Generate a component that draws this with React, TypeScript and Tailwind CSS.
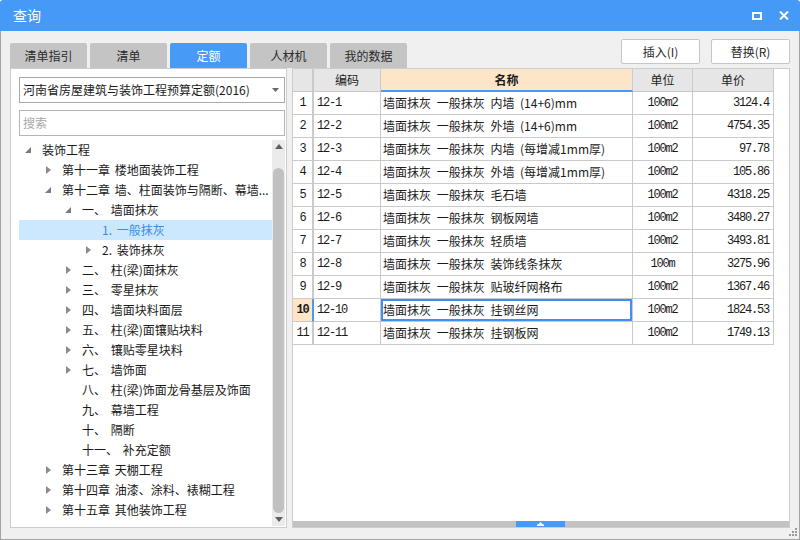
import React from "react";

type Node = { lvl: number; icon?: "open" | "closed"; text: string; sel?: boolean };

const tree: Node[] = [
  { lvl: 0, icon: "open", text: "装饰工程" },
  { lvl: 1, icon: "closed", text: "第十一章 楼地面装饰工程" },
  { lvl: 1, icon: "open", text: "第十二章 墙、柱面装饰与隔断、幕墙..." },
  { lvl: 2, icon: "open", text: "一、 墙面抹灰" },
  { lvl: 3, text: "1. 一般抹灰", sel: true },
  { lvl: 3, icon: "closed", text: "2. 装饰抹灰" },
  { lvl: 2, icon: "closed", text: "二、 柱(梁)面抹灰" },
  { lvl: 2, icon: "closed", text: "三、 零星抹灰" },
  { lvl: 2, icon: "closed", text: "四、 墙面块料面层" },
  { lvl: 2, icon: "closed", text: "五、 柱(梁)面镶贴块料" },
  { lvl: 2, icon: "closed", text: "六、 镶贴零星块料" },
  { lvl: 2, icon: "closed", text: "七、 墙饰面" },
  { lvl: 2, text: "八、 柱(梁)饰面龙骨基层及饰面" },
  { lvl: 2, text: "九、 幕墙工程" },
  { lvl: 2, text: "十、 隔断" },
  { lvl: 2, text: "十一、 补充定额" },
  { lvl: 1, icon: "closed", text: "第十三章 天棚工程" },
  { lvl: 1, icon: "closed", text: "第十四章 油漆、涂料、裱糊工程" },
  { lvl: 1, icon: "closed", text: "第十五章 其他装饰工程" },
];

const rows = [
  ["12-1", "墙面抹灰 一般抹灰 内墙 (14+6)mm", "100m2", "3124.4"],
  ["12-2", "墙面抹灰 一般抹灰 外墙 (14+6)mm", "100m2", "4754.35"],
  ["12-3", "墙面抹灰 一般抹灰 内墙 (每增减1mm厚)", "100m2", "97.78"],
  ["12-4", "墙面抹灰 一般抹灰 外墙 (每增减1mm厚)", "100m2", "105.86"],
  ["12-5", "墙面抹灰 一般抹灰 毛石墙", "100m2", "4318.25"],
  ["12-6", "墙面抹灰 一般抹灰 钢板网墙", "100m2", "3480.27"],
  ["12-7", "墙面抹灰 一般抹灰 轻质墙", "100m2", "3493.81"],
  ["12-8", "墙面抹灰 一般抹灰 装饰线条抹灰", "100m", "3275.96"],
  ["12-9", "墙面抹灰 一般抹灰 贴玻纤网格布", "100m2", "1367.46"],
  ["12-10", "墙面抹灰 一般抹灰 挂钢丝网", "100m2", "1824.53"],
  ["12-11", "墙面抹灰 一般抹灰 挂钢板网", "100m2", "1749.13"],
];

const tabs = ["清单指引", "清单", "定额", "人材机", "我的数据"];

function Arrow({ kind }: { kind?: "open" | "closed" }) {
  if (kind === "open")
    return (
      <svg width="6" height="6" viewBox="0 0 6 6">
        <path d="M6 0 L6 6 L0 6 Z" fill="#7b7b7b" />
      </svg>
    );
  if (kind === "closed")
    return (
      <svg width="5" height="8" viewBox="0 0 5 8">
        <path d="M0 0 L5 4 L0 8 Z" fill="#8c8c8c" />
      </svg>
    );
  return null;
}

function TreeRow({ n }: { n: Node }) {
  return (
    <div
      className={`flex h-[20px] items-center whitespace-nowrap text-[12px] leading-[20px] ${
        n.sel ? "bg-[#cce8ff] text-[#3b8de6]" : "text-[#1a1a1a]"
      }`}
    >
      <div style={{ width: n.lvl * 20 }} className="shrink-0" />
      <div className="flex w-[18px] shrink-0 items-center justify-center">
        <Arrow kind={n.icon} />
      </div>
      <span className="ml-[5px] overflow-hidden [word-spacing:2px]">{n.text}</span>
    </div>
  );
}

function LeftPanel() {
  return (
    <div className="flex w-[277px] flex-col border border-[#cdcdcd] bg-white pl-[8px] pr-[1px] pt-[8px]">
      <div className="flex h-[26px] items-center justify-between border border-[#a9a9a9] pl-[3px] pr-[5px] text-[12px] text-[#1a1a1a]">
        <span>河南省房屋建筑与装饰工程预算定额(2016)</span>
        <svg width="7" height="4" viewBox="0 0 7 4">
          <path d="M0 0 L7 0 L3.5 4 Z" fill="#6a6a6a" />
        </svg>
      </div>
      <div className="mt-[7px] flex h-[26px] items-center border border-[#b4b4b4] pl-[3px] text-[12px] text-[#a8a8a8]">
        搜索
      </div>
      <div className="mt-[4px] flex min-h-0 flex-1 pb-[1px]">
        <div className="flex-1 overflow-hidden">
          {tree.map((n, i) => (
            <TreeRow key={i} n={n} />
          ))}
        </div>
        <div className="flex w-[13px] flex-col items-center bg-[#ebebeb]">
          <div className="flex h-[12px] items-center justify-center">
            <svg width="8" height="5" viewBox="0 0 8 5">
              <path d="M0 5 L4 0 L8 5 Z" fill="#5f5f5f" />
            </svg>
          </div>
          <div className="mt-[16px] h-[345px] w-[11px] rounded-[6px] bg-[#c1c1c1]" />
          <div className="flex flex-1 items-center justify-center">
            <svg width="8" height="5" viewBox="0 0 8 5">
              <path d="M0 0 L8 0 L4 5 Z" fill="#5f5f5f" />
            </svg>
          </div>
        </div>
      </div>
    </div>
  );
}

const grid = "grid w-[481px] grid-cols-[21px_67px_252px_60px_81px]";
const mono = "font-['Liberation_Mono',monospace] text-[12px] tracking-[-1.2px]";

function RightPanel() {
  return (
    <div className="flex flex-1 flex-col border border-[#cdcdcd] bg-white">
      <div className={`${grid} h-[23px] text-[12px] text-[#1a1a1a]`}>
        <div className="border-b border-r-2 border-[#cacaca] bg-[#e6e6e6]" />
        <div className="flex items-center justify-center border-b border-r border-[#cacaca] bg-[#e6e6e6]">编码</div>
        <div className="flex items-center justify-center border-r border-b-2 border-r-[#cacaca] border-b-[#4a9af5] bg-[#fde6c8] font-bold">
          名称
        </div>
        <div className="flex items-center justify-center border-b border-r border-[#cacaca] bg-[#e6e6e6]">单位</div>
        <div className="flex items-center justify-center border-b border-r border-[#cacaca] bg-[#e6e6e6]">单价</div>
      </div>
      {rows.map((r, i) => {
        const sel = i === 9;
        return (
          <div key={i} className={`${grid} h-[23px] text-[#1a1a1a]`}>
            <div
              className={`flex items-center justify-center border-b border-r-2 border-b-[#cacaca] ${mono} ${
                sel ? "border-r-[#4a9af5] bg-[#fde5c6] font-bold" : "border-r-[#cacaca]"
              }`}
            >
              {i + 1}
            </div>
            <div className={`flex items-center border-b border-r border-[#cacaca] pl-[3px] ${mono}`}>{r[0]}</div>
            <div
              className={`flex items-center border-b border-r border-[#cacaca] pl-[2px] text-[12px] [word-spacing:3px] ${
                sel ? "shadow-[inset_0_0_0_2px_#3f8ff0]" : ""
              }`}
            >
              {r[1]}
            </div>
            <div className={`flex items-center justify-center border-b border-r border-[#cacaca] ${mono}`}>{r[2]}</div>
            <div className={`flex items-center justify-end border-b border-r border-[#cacaca] pr-[4px] ${mono}`}>{r[3]}</div>
          </div>
        );
      })}
      <div className="flex-1" />
      <div className="flex h-[6px] bg-[#c2c2c2]">
        <div className="w-[223px]" />
        <div className="flex w-[49px] items-center justify-center bg-[#459bf7]">
          <svg width="7" height="4" viewBox="0 0 7 4">
            <path d="M3.5 0 L6 2.5 L7 2.5 L7 4 L0 4 L0 2.5 L1 2.5 Z" fill="#ffffff" />
          </svg>
        </div>
      </div>
    </div>
  );
}

export default function App() {
  return (
    <div className="flex h-[540px] w-[800px] flex-col overflow-hidden rounded-t-[3px] bg-white font-['Noto_Sans_CJK_SC',sans-serif]">
      <div className="flex h-[31px] shrink-0 items-center justify-between bg-[#4599f7] pl-[13px] pr-[11px] text-white">
        <span className="text-[14px]">查询</span>
        <div className="flex items-center gap-[17px]">
          <svg width="10" height="8" viewBox="0 0 10 8">
            <rect x="1" y="1" width="8" height="6" fill="none" stroke="#fff" strokeWidth="2" />
          </svg>
          <svg width="10" height="9" viewBox="0 0 10 9">
            <path d="M1 0.5 L9 8.5 M9 0.5 L1 8.5" stroke="#fff" strokeWidth="2" />
          </svg>
        </div>
      </div>
      <div className="relative flex flex-1 flex-col border-x border-b border-[#a3a3a3] bg-[#f0f0f0] px-[9px] pb-[11px] pt-[8px]">
        <div className="flex h-[29px] items-start justify-between">
          <div className="flex gap-[3px] self-end">
            {tabs.map((t) => (
              <div
                key={t}
                className={`flex h-[25px] w-[77px] items-center justify-center rounded-t-[2px] text-[12px] ${
                  t === "定额" ? "bg-[#469bf7] text-white" : "bg-[#c4c4c4] text-[#2a2a2a]"
                }`}
              >
                {t}
              </div>
            ))}
          </div>
          <div className="flex gap-[11px]">
            <div className="flex h-[25px] w-[79px] items-center justify-center rounded-[2px] border border-[#c6c6c6] bg-white text-[12px] text-[#2a2a2a]">
              插入(I)
            </div>
            <div className="flex h-[25px] w-[79px] items-center justify-center rounded-[2px] border border-[#c6c6c6] bg-white text-[12px] text-[#2a2a2a]">
              替换(R)
            </div>
          </div>
        </div>
        <div className="flex min-h-0 flex-1 gap-[5px]">
          <LeftPanel />
          <RightPanel />
        </div>
        <svg className="absolute bottom-[3px] right-[2px]" width="8" height="8" viewBox="0 0 8 8">
          <rect x="6" y="0" width="2" height="2" fill="#9a9a9a" />
          <rect x="3" y="3" width="2" height="2" fill="#9a9a9a" />
          <rect x="6" y="3" width="2" height="2" fill="#9a9a9a" />
          <rect x="0" y="6" width="2" height="2" fill="#9a9a9a" />
          <rect x="3" y="6" width="2" height="2" fill="#9a9a9a" />
          <rect x="6" y="6" width="2" height="2" fill="#9a9a9a" />
        </svg>
      </div>
    </div>
  );
}
